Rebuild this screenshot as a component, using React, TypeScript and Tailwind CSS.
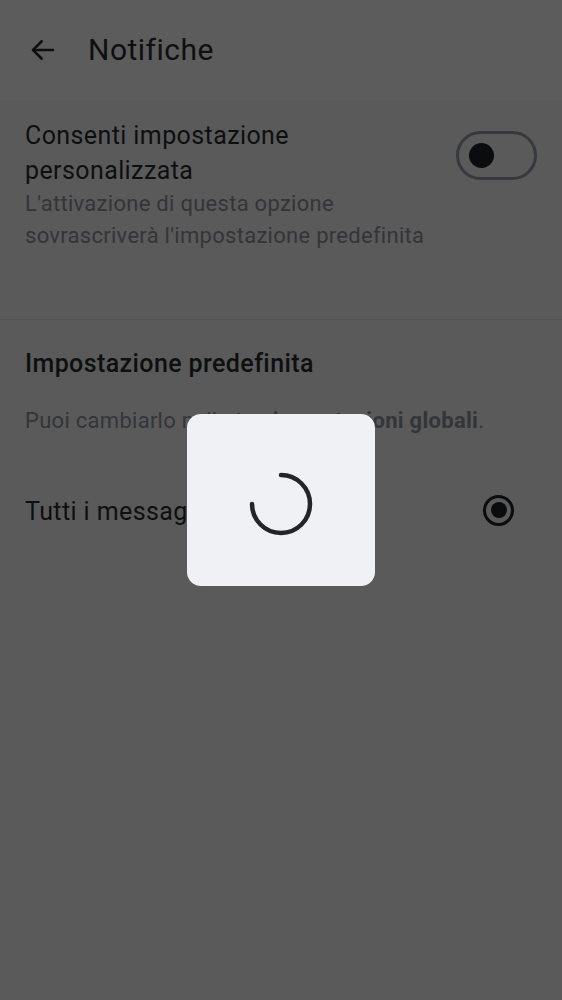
import React from 'react';

const font = { fontFamily: 'Roboto, "Noto Sans", sans-serif' };

const Spinner = () => (
  <svg width="66" height="66" viewBox="0 0 66 66" fill="none">
    {/* 270° arc, 12 o'clock clockwise to 9 o'clock */}
    <path
      d="M33 4 A29 29 0 1 1 4 33"
      stroke="#22252a"
      strokeWidth="4.5"
      strokeLinecap="round"
    />
  </svg>
);

const App = () => {
  return (
    <div className="min-h-screen w-full bg-[#5a5a5a] text-[#0e0f11]" style={font}>
      {/* Header */}
      <header className="h-[100px] bg-[#5c5c5c] flex items-center pl-[28px]">
        <svg width="30" height="30" viewBox="0 0 24 24" fill="none" stroke="#0e0f11" strokeWidth="2" strokeLinecap="round" strokeLinejoin="round">
          <path d="M20 12H4.5" />
          <path d="M11 5l-7 7 7 7" />
        </svg>
        <h1 className="ml-[30px] text-[30px] leading-none tracking-[0.5px]">Notifiche</h1>
      </header>

      {/* Custom setting toggle */}
      <section className="px-[25px] pt-[18px] pb-[67px] border-b border-[#535353] flex items-start justify-between">
        <div className="pr-4">
          <p className="text-[25px] leading-[35px] tracking-[0.4px]">
            Consenti impostazione
            <br />
            personalizzata
          </p>
          <p className="text-[22px] leading-[32px] tracking-[0.28px] text-[#33353a]">
            L'attivazione di questa opzione
            <br />
            sovrascriverà l'impostazione predefinita
          </p>
        </div>
        <div className="mt-[13px] w-[81px] h-[49px] shrink-0 rounded-full border-[3px] border-[#36393e] flex items-center pl-[10px]">
          <div className="w-[25px] h-[25px] rounded-full bg-[#0b0c0e]" />
        </div>
      </section>

      {/* Default setting */}
      <section className="px-[25px] pt-[29px]">
        <h2 className="text-[25px] font-medium leading-[30px] tracking-[0.4px]">Impostazione predefinita</h2>
        <p className="mt-[27px] text-[22px] leading-[30px] tracking-[0.28px] text-[#33353a]">
          Puoi cambiarlo nelle tue <span className="font-bold">impostazioni globali</span>.
        </p>
        <div className="mt-[61px] flex items-center justify-between">
          <span className="text-[25px] leading-[30px] tracking-[0.4px]">Tutti i messaggi</span>
          <div className="mr-[23px] -mt-[4px] w-[31px] h-[31px] rounded-full border-[3px] border-[#0b0c0e] flex items-center justify-center">
            <div className="w-[16px] h-[16px] rounded-full bg-[#0b0c0e]" />
          </div>
        </div>
      </section>

      {/* Loading dialog */}
      <div className="fixed inset-0 flex items-center justify-center">
        <div className="w-[188px] h-[172px] rounded-[14px] bg-[#f0f1f5] flex items-center justify-center">
          <div className="mt-[8px]">
            <Spinner />
          </div>
        </div>
      </div>
    </div>
  );
};

export default App;
